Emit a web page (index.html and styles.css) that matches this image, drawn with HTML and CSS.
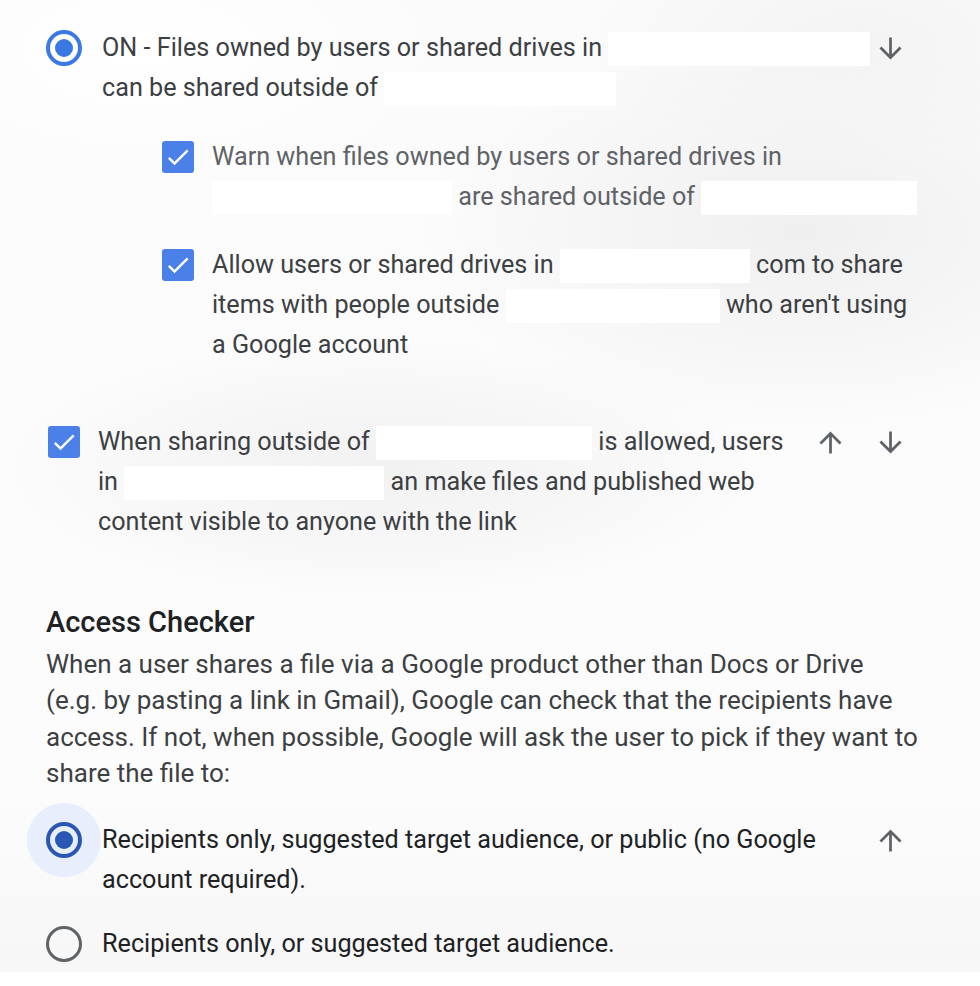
FILE: index.html
```html
<!DOCTYPE html>
<html>
<head>
<meta charset="utf-8">
<link rel="stylesheet" href="styles.css">
</head>
<body>
<div class="page">
  <div class="option first">
    <div class="control"><span class="radio on"></span></div>
    <div class="label">ON - Files owned by users or shared drives in <span class="redact" style="width:262px"></span><br>can be shared outside of <span class="redact" style="width:232px"></span></div>
    <div class="actions">
      <svg class="arrow" viewBox="0 0 24 24"><path d="M20 12l-1.41-1.41L13 16.17V4h-2v12.17l-5.58-5.59L4 12l8 8 8-8z"/></svg>
    </div>
  </div>

  <div class="sub">
    <div class="option nested warn">
      <div class="control"><span class="check"><svg viewBox="0 0 24 24"><path d="M9 16.17L4.83 12l-1.42 1.41L9 19 21 7l-1.41-1.41z"/></svg></span></div>
      <div class="label light">Warn when files owned by users or shared drives in<br><span class="redact" style="width:240px"></span> are shared outside of <span class="redact" style="width:216px"></span></div>
    </div>
    <div class="option nested allow">
      <div class="control"><span class="check"><svg viewBox="0 0 24 24"><path d="M9 16.17L4.83 12l-1.42 1.41L9 19 21 7l-1.41-1.41z"/></svg></span></div>
      <div class="label">Allow users or shared drives in <span class="redact" style="width:190px"></span> com to share<br>items with people outside <span class="redact" style="width:214px"></span> who aren't using<br>a Google account</div>
    </div>
  </div>

  <div class="option link">
    <div class="control small"><span class="check"><svg viewBox="0 0 24 24"><path d="M9 16.17L4.83 12l-1.42 1.41L9 19 21 7l-1.41-1.41z"/></svg></span></div>
    <div class="label">When sharing outside of <span class="redact" style="width:216px"></span> is allowed, users<br>in <span class="redact" style="width:260px"></span> an make files and published web<br>content visible to anyone with the link</div>
    <div class="actions two">
      <svg class="arrow" viewBox="0 0 24 24"><path d="M4 12l1.41 1.41L11 7.83V20h2V7.83l5.58 5.59L20 12l-8-8-8 8z"/></svg>
      <svg class="arrow" viewBox="0 0 24 24"><path d="M20 12l-1.41-1.41L13 16.17V4h-2v12.17l-5.58-5.59L4 12l8 8 8-8z"/></svg>
    </div>
  </div>

  <section class="checker">
    <h2>Access Checker</h2>
    <p>When a user shares a file via a Google product other than Docs or Drive<br>(e.g. by pasting a link in Gmail), Google can check that the recipients have<br>access. If not, when possible, Google will ask the user to pick if they want to<br>share the file to:</p>
  </section>

  <div class="option choice selected">
    <div class="control"><span class="halo"><span class="radio dark"></span></span></div>
    <div class="label">Recipients only, suggested target audience, or public (no Google<br>account required).</div>
    <div class="actions">
      <svg class="arrow" viewBox="0 0 24 24"><path d="M4 12l1.41 1.41L11 7.83V20h2V7.83l5.58 5.59L20 12l-8-8-8 8z"/></svg>
    </div>
  </div>

  <div class="option choice last">
    <div class="control"><span class="radio off"></span></div>
    <div class="label">Recipients only, or suggested target audience.</div>
  </div>
</div>
</body>
</html>
```

FILE: styles.css
```css
html, body {
  margin: 0;
  padding: 0;
}
body {
  width: 980px;
  height: 986px;
  overflow: hidden;
  background: #ffffff;
  font-family: Roboto, "Liberation Sans", Arial, sans-serif;
  color: #3c4043;
}
.page {
  height: 972px;
  box-sizing: border-box;
  padding: 28px 0 0 46px;
  background:
    radial-gradient(ellipse 320px 150px at 140px 50px, rgba(255,255,255,1), rgba(255,255,255,0)),
    radial-gradient(ellipse 380px 200px at 800px 230px, rgba(238,238,238,0.9), rgba(238,238,238,0)),
    radial-gradient(ellipse 380px 130px at 380px 470px, rgba(240,240,240,0.9), rgba(240,240,240,0)),
    radial-gradient(ellipse 300px 120px at 860px 40px, rgba(243,243,243,0.9), rgba(243,243,243,0)),
    linear-gradient(#fbfbfb, #fcfcfc 80%, #f7f7f7);
}
.option {
  display: flex;
  align-items: flex-start;
  font-size: 25.2px;
  line-height: 40px;
  white-space: nowrap;
}
.control {
  width: 56px;
  height: 40px;
  flex: none;
  display: flex;
  align-items: center;
}
.control.small {
  width: 50px;
  margin-left: 2px;
}
.label {
  flex: none;
}
.light {
  color: #5f6368;
}
.actions {
  margin-left: auto;
  height: 40px;
  display: flex;
  align-items: center;
  justify-content: flex-end;
  gap: 27px;
}
.arrow {
  width: 33px;
  height: 33px;
  fill: #5f6368;
}
.radio {
  display: block;
  box-sizing: border-box;
  width: 36px;
  height: 36px;
  border-radius: 50%;
  border: 4px solid #3a78e6;
  position: relative;
  flex: none;
}
.radio.on::after,
.radio.dark::after {
  content: "";
  position: absolute;
  left: 5px;
  top: 5px;
  width: 18px;
  height: 18px;
  border-radius: 50%;
  background: #3a78e6;
}
.radio.dark {
  border-color: #2a56b5;
}
.radio.dark::after {
  background: #2a56b5;
}
.radio.off {
  border-color: #5f6368;
  border-width: 3.5px;
}
.halo {
  display: flex;
  align-items: center;
  justify-content: center;
  width: 74px;
  height: 74px;
  flex: none;
  margin-left: -19px;
  border-radius: 50%;
  background: #e8eefb;
}
.check {
  display: flex;
  align-items: center;
  justify-content: center;
  width: 32px;
  height: 32px;
  border-radius: 3px;
  background: #4a80e8;
}
.check svg {
  width: 28px;
  height: 28px;
  fill: #ffffff;
}
.sub {
  padding-left: 116px;
}
.nested .control {
  width: 50px;
}
.first {
  padding-right: 73px;
}
.warn {
  margin-top: 29px;
}
.allow {
  margin-top: 28px;
}
.link {
  margin-top: 57px;
  padding-right: 73px;
}
.redact {
  display: inline-block;
  height: 34px;
  vertical-align: middle;
  background: #ffffff;
}
.checker {
  margin-top: 62px;
}
.checker h2 {
  margin: 0;
  font-size: 29px;
  font-weight: 500;
  line-height: 36px;
  color: #202124;
}
.checker p {
  margin: 6px 0 0;
  font-size: 26px;
  line-height: 36.3px;
  color: #3c4043;
  white-space: nowrap;
}
.choice.selected {
  margin-top: 29px;
  padding-right: 73px;
  color: #202124;
}
.choice.last {
  margin-top: 24px;
  color: #202124;
}
```
